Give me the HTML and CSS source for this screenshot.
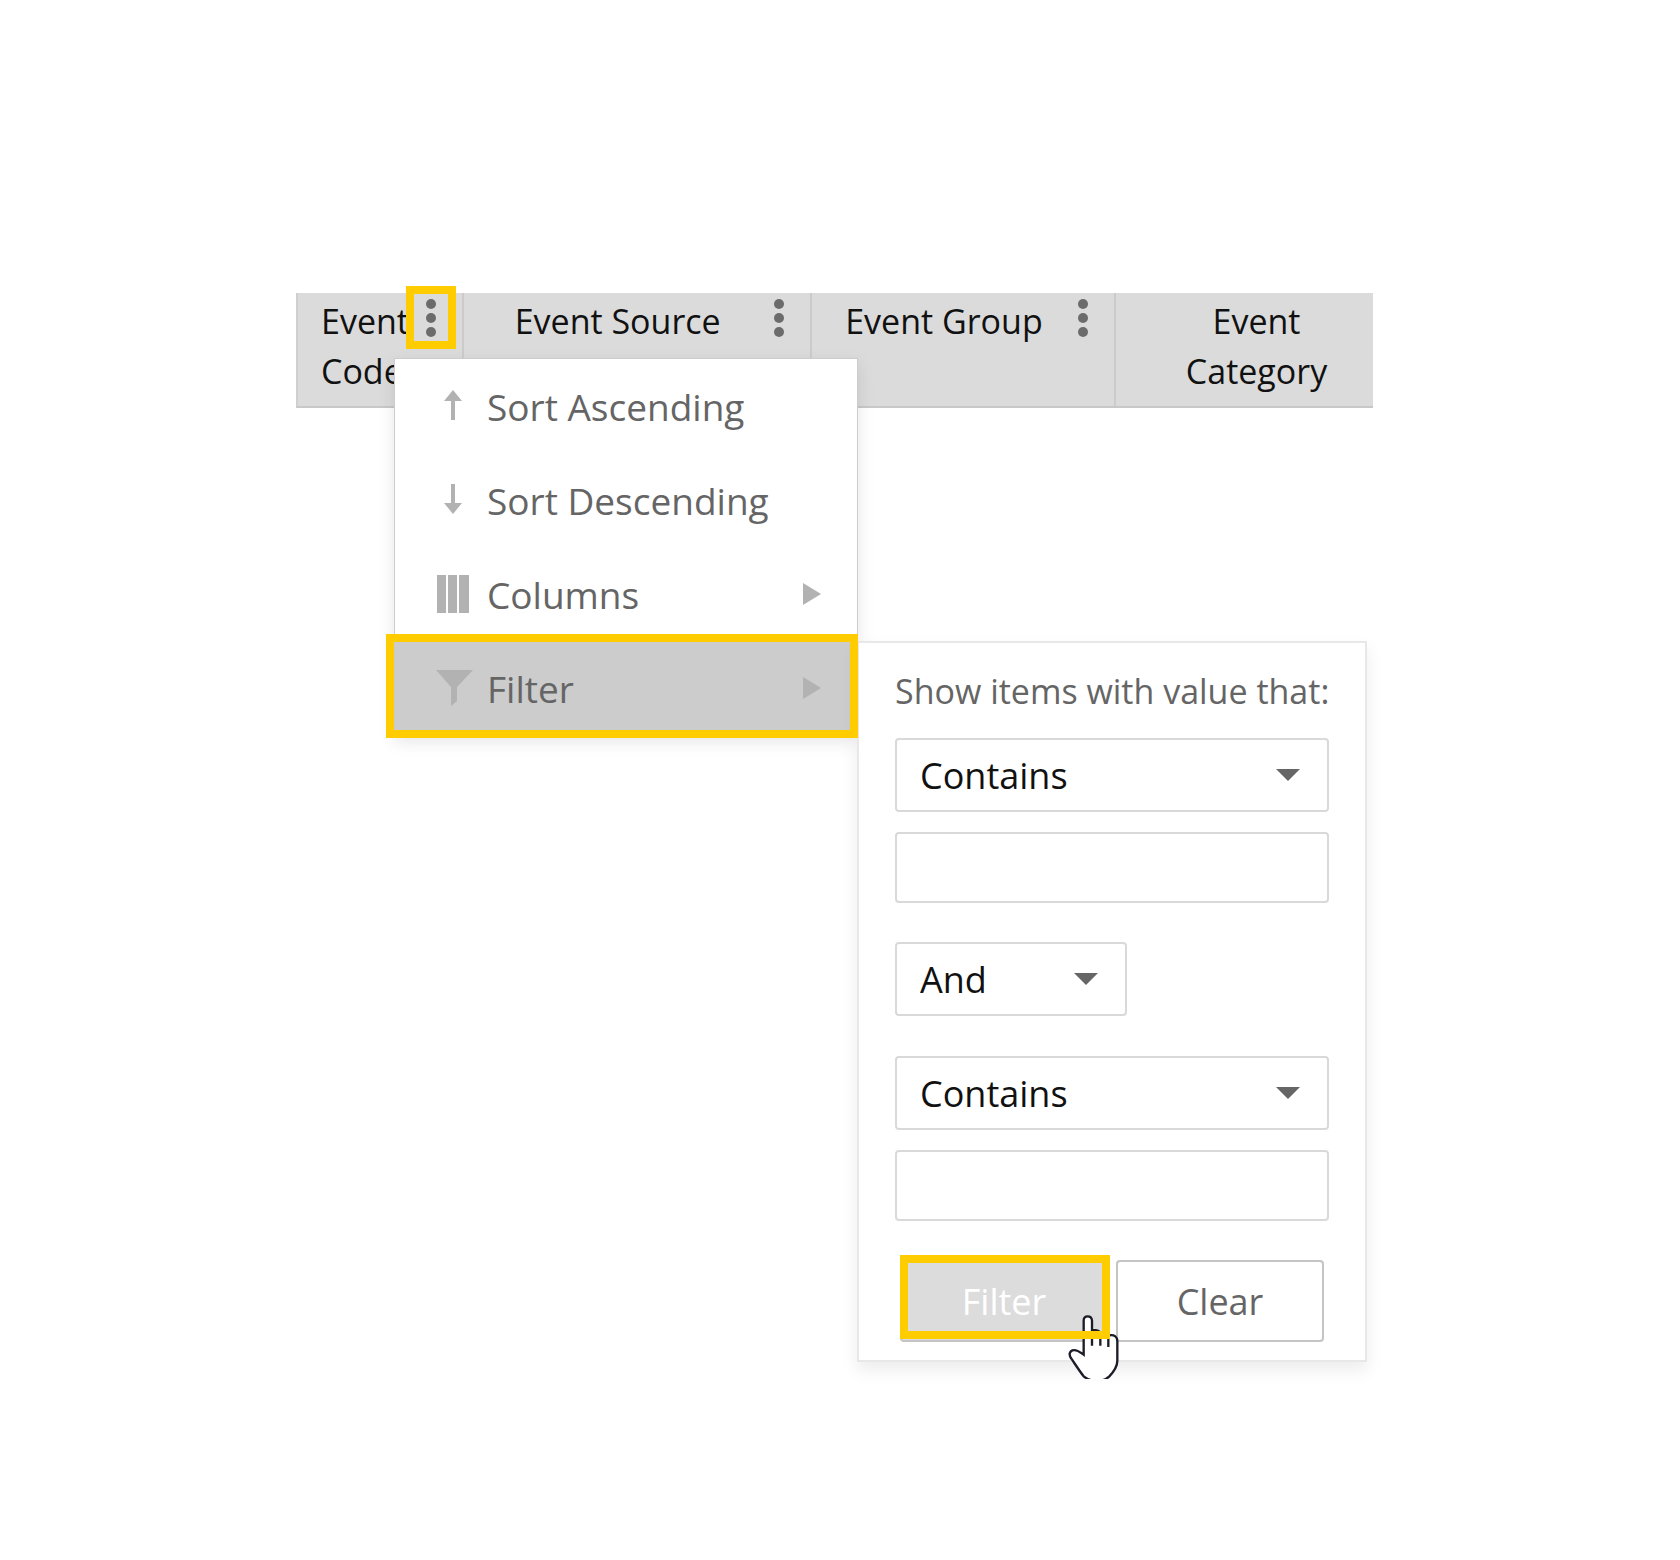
FILE: index.html
```html
<!DOCTYPE html>
<html lang="en">
<head>
    <meta charset="UTF-8">
    <title>Events</title>
    <meta name="viewport" content="width=device-width, initial-scale=1">
    <link rel="stylesheet" href="styles.css">
</head>
<body>

    <div class="grid">
        <!--column headers-->
        <table class="grid-head">
            <thead>
                <tr>
                    <th class="col-code">Event<br>Code
                        <button class="dots on" type="button" aria-label="Event Code menu"><i></i><i></i><i></i></button>
                    </th>
                    <th class="col-source">Event Source
                        <button class="dots" type="button" aria-label="Event Source menu"><i></i><i></i><i></i></button>
                    </th>
                    <th class="col-group">Event Group
                        <button class="dots" type="button" aria-label="Event Group menu"><i></i><i></i><i></i></button>
                    </th>
                    <th class="col-category">Event<br>Category</th>
                </tr>
            </thead>
        </table>

        <!--column menu-->
        <ul class="menu">
            <li>
                <button class="item" type="button">
                    <svg class="icon" viewBox="0 0 40 40"><path d="M20 4l9 11h-7v19h-4V15h-7z"/></svg>
                    <span>Sort Ascending</span>
                </button>
            </li>
            <li>
                <button class="item" type="button">
                    <svg class="icon" viewBox="0 0 40 40"><path d="M18 4h4v19h7l-9 11-9-11h7z"/></svg>
                    <span>Sort Descending</span>
                </button>
            </li>
            <li>
                <button class="item" type="button">
                    <svg class="icon" viewBox="0 0 40 40"><path d="M4 1h9v38H4zM15 1h9v38h-9zM26 1h10v38H26z"/></svg>
                    <span>Columns</span>
                    <svg class="more" viewBox="0 0 18 22"><path d="M0 0l18 11L0 22z"/></svg>
                </button>
            </li>
            <li class="on">
                <button class="item" type="button">
                    <svg class="icon" viewBox="0 0 40 40"><path d="M3 2h37L24 19v14l-6 5V19z"/></svg>
                    <span>Filter</span>
                    <svg class="more" viewBox="0 0 18 22"><path d="M0 0l18 11L0 22z"/></svg>
                </button>

                <!--filter form-->
                <form class="filter">
                    <p class="title">Show items with value that:</p>
                    <div class="select">
                        <select aria-label="First condition"><option>Contains</option><option>Is equal to</option></select>
                    </div>
                    <input type="text" aria-label="First value">
                    <div class="select logic">
                        <select aria-label="Logic"><option>And</option><option>Or</option></select>
                    </div>
                    <div class="select">
                        <select aria-label="Second condition"><option>Contains</option><option>Is equal to</option></select>
                    </div>
                    <input type="text" aria-label="Second value">
                    <div class="buttons">
                        <button class="apply" type="button">Filter
                            <svg class="hand" viewBox="80 70 165 195">
                                <path class="shape" d="M133 192V90q0-13 12-13t13 13v28q18-1 25 8 18-4 27 8 24-3 24 18v58c0 18-10 32-24 47q-15 14-37 14t-40-14C116 235 104 215 94 201q-8-16 5-22 12-4 34 13z"/>
                                <path class="line" d="M158 145v20M183 145v20M207 145v24"/>
                            </svg>
                        </button>
                        <button class="clear" type="reset">Clear</button>
                    </div>
                </form>
            </li>
        </ul>
    </div>

</body>
</html>
```
FILE: styles.css
```css
*{margin:0;padding:0;box-sizing:border-box;}
li{list-style: none}

body{
    min-height: 100vh;
    padding: 293px 307px 183px 296px;
    background-color: #fff;
    font-family: "Open Sans", "Noto Sans", sans-serif;
}
button,select,input{
    font-family: inherit;
}

.grid{
    position: relative;
    /*room for the open menu*/
    min-height: 1084px;
}

/*headers*/
.grid-head{
    width: 100%;
    table-layout: fixed;
    border-collapse: separate;
    border-spacing: 0;
    background-color: #dbdbdb;
    border-left: 2px solid #cfcfcf;
    border-bottom: 2px solid #c8c8c8;
}
.grid-head th{
    position: relative;
    padding: 3px 38px 10px 0;
    border-right: 2px solid #cbcbcb;

    color: #111;
    font-size: 34px;
    font-weight: normal;
    line-height: 50px;
    text-align: center;
    vertical-align: top;
}
.grid-head .col-code{
    width: 15.4%;
    padding-left: 23px;
    padding-right: 0;
    text-align: left;
}
.grid-head .col-source{width: 32.4%}
.grid-head .col-group{width: 28.3%}
.grid-head .col-category{
    padding-left: 24px;
    padding-right: 0;
    border-right: none;
}

.dots{
    position: absolute;
    top: -7px;
    right: 6px;

    display: flex;
    flex-direction: column;
    align-items: center;
    justify-content: center;
    gap: 4px;
    width: 50px;
    height: 63px;
    border: 8px solid transparent;
    background-color: transparent;
}
.dots.on{
    border-color: #fc0;
    background-color: #dbdbdb;
}
.dots i{
    width: 10px;
    height: 10px;
    border-radius: 50%;
    background-color: #6b6b6b;
}

/*menu*/
.menu{
    position: absolute;
    top: 65px;
    left: 98px;

    width: 464px;
    border: 1px solid #ccc;
    background-color: #fff;
    box-shadow: 0 6px 16px rgba(0,0,0,.1);
}
.menu li{
    position: relative;
}
.item{
    display: flex;
    align-items: center;
    gap: 14px;
    width: 100%;
    height: 94px;
    padding: 0 36px 0 38px;
    border: none;
    background-color: transparent;

    color: #656565;
    font-size: 37px;
}
.icon{
    width: 40px;
    height: 40px;
    fill: #b2b2b2;
}
.more{
    width: 18px;
    height: 22px;
    margin-left: auto;
    fill: #b2b2b2;
}
.menu li.on .item{
    background-color: #ccc;
}
.menu li.on::after{
    content: "";
    position: absolute;
    inset: -7px -1px -3px -9px;
    border: 8px solid #fc0;
    pointer-events: none;
}

/*filter form*/
.filter{
    position: absolute;
    top: 0;
    left: 100%;

    width: 510px;
    padding: 23px 36px 18px;
    border: 2px solid #e8e8e8;
    background-color: #fff;
    box-shadow: 0 8px 16px rgba(0,0,0,.08);
}
.filter .title{
    margin-bottom: 22px;
    color: #656565;
    font-size: 34px;
    line-height: 50px;
    white-space: nowrap;
}
.filter .select{
    position: relative;
    height: 74px;
    margin-bottom: 20px;
}
.filter .select::after{
    content: "";
    position: absolute;
    top: 31px;
    right: 29px;
    border: 12px solid transparent;
    border-top-color: #666;
    border-bottom: none;
    pointer-events: none;
}
.filter .logic{
    width: 232px;
    margin-bottom: 40px;
}
.filter select,
.filter input{
    display: block;
    width: 100%;
    padding: 0 23px;
    border: 2px solid #d9d9d9;
    border-radius: 4px;
    background-color: #fff;

    color: #111;
    font-size: 36px;
    appearance: none;
}
.filter select{
    height: 100%;
}
.filter input{
    height: 71px;
    margin-bottom: 39px;
}

.buttons{
    display: flex;
    gap: 8px;
    padding: 0 5px;
}
.buttons button{
    position: relative;
    flex: 1;
    height: 82px;
    border: 2px solid #c4c4c4;
    border-radius: 4px;
    background-color: #fff;

    color: #656565;
    font-size: 36px;
}
.buttons .apply{
    background-color: #dcdcdc;
    color: #fff;
    z-index: 1;
}
.buttons .apply::after{
    content: "";
    position: absolute;
    inset: -7px -4px 1px -2px;
    border: 8px solid #fc0;
}
.hand{
    position: absolute;
    top: 52px;
    right: -15px;
    width: 55px;
    height: 65px;
}
.hand path{
    stroke: #1c1c28;
    stroke-width: 7;
}
.hand .shape{fill: #fff}
.hand .line{fill: none}
```
